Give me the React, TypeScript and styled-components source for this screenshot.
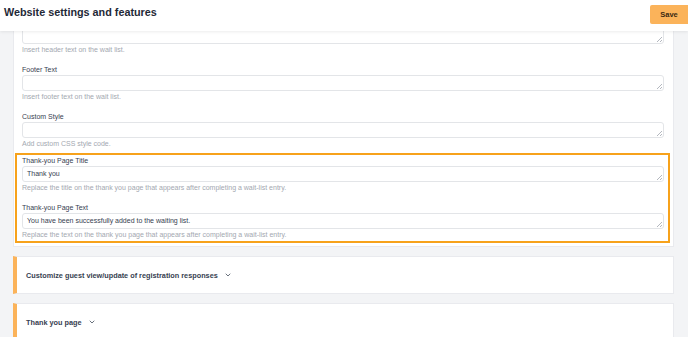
import React from "react";
import styled, { createGlobalStyle } from "styled-components";
import { ChevronDown } from "lucide-react";

const GlobalStyle = createGlobalStyle`
  html, body {
    margin: 0;
    padding: 0;
    background: #f3f4f6;
    font-family: "Liberation Sans", Arial, sans-serif;
    overflow: hidden;
  }
`;

const Page = styled.div`
  width: 688px;
  height: 337px;
  display: flex;
  flex-direction: column;
  overflow: hidden;
`;

const Header = styled.header`
  position: relative;
  z-index: 2;
  height: 31px;
  flex-shrink: 0;
  background: #fff;
  box-shadow: 0 1px 3px rgba(0, 0, 0, 0.08);
  display: flex;
  justify-content: space-between;
  align-items: flex-start;
  padding-left: 4px;
`;

const Title = styled.h1`
  margin: 6px 0 0;
  font-size: 10.8px;
  font-weight: 700;
  color: #1f2937;
`;

const SaveButton = styled.button`
  margin-top: 5px;
  width: 38px;
  height: 19px;
  border: none;
  border-radius: 2px 0 0 2px;
  background: #fbb35a;
  color: #3b2a12;
  font-family: inherit;
  font-size: 7.5px;
  font-weight: 700;
  padding: 0;
`;

const Scroller = styled.div`
  flex: 1;
  overflow: hidden;
`;

const Content = styled.div`
  margin-top: -3px;
  padding: 0 14px 0 13px;
  display: flex;
  flex-direction: column;
`;

const Card = styled.div`
  background: #fff;
  border: 1px solid #e9eaee;
  border-top: none;
  padding: 0 9px 3px 8px;
`;

const Field = styled.div`
  display: flex;
  flex-direction: column;
  margin-bottom: 11px;
  &:last-child {
    margin-bottom: 0;
  }
`;

const Label = styled.label`
  font-size: 7px;
  line-height: 9px;
  color: #374151;
  margin-bottom: 1px;
`;

const AreaWrap = styled.div`
  position: relative;
  &::after {
    content: "";
    position: absolute;
    right: 2px;
    bottom: 2px;
    width: 5px;
    height: 5px;
    background: linear-gradient(
      135deg,
      transparent 0 45%,
      #b4b8bf 45% 58%,
      transparent 58% 72%,
      #b4b8bf 72% 86%,
      transparent 86%
    );
  }
`;

const Area = styled.textarea`
  box-sizing: border-box;
  height: 16px;
  width: 100%;
  border: 1px solid #e3e5e8;
  border-radius: 3px;
  padding: 2px 4px;
  font-family: inherit;
  font-size: 7px;
  line-height: 9px;
  color: #374151;
  background: #fff;
  outline: none;
  resize: none;
  display: block;
  margin: 0;
  overflow: hidden;
`;

const Help = styled.div`
  margin-top: 2px;
  font-size: 7px;
  line-height: 8px;
  color: #a3a8b0;
`;

const Highlight = styled.div`
  margin: -6px -6px 0 -7px;
  border: 2px solid #f7a21b;
  padding: 1px 4px 2px 5px;
  display: flex;
  flex-direction: column;
`;

const Section = styled.div<{ $top: number }>`
  margin-top: ${(p) => p.$top}px;
  height: 38px;
  flex-shrink: 0;
  background: #fff;
  border: 1px solid #e9eaee;
  border-left: 4px solid #fbb35a;
  box-sizing: border-box;
  display: flex;
  align-items: center;
  padding-left: 9px;
  gap: 6px;
`;

const SectionTitle = styled.span`
  font-size: 7.3px;
  font-weight: 700;
  color: #374151;
`;

const fields = [
  { label: "Footer Text", help: "Insert footer text on the wait list.", value: "" },
  { label: "Custom Style", help: "Add custom CSS style code.", value: "" },
];

const highlighted = [
  {
    label: "Thank-you Page Title",
    help: "Replace the title on the thank you page that appears after completing a wait-list entry.",
    value: "Thank you",
  },
  {
    label: "Thank-you Page Text",
    help: "Replace the text on the thank you page that appears after completing a wait-list entry.",
    value: "You have been successfully added to the waiting list.",
  },
];

const TextField = ({ label, help, value }: { label?: string; help: string; value: string }) => (
  <Field>
    {label && <Label>{label}</Label>}
    <AreaWrap>
      <Area readOnly value={value} />
    </AreaWrap>
    <Help>{help}</Help>
  </Field>
);

const App = () => {
  return (
    <Page>
      <GlobalStyle />
      <Header>
        <Title>Website settings and features</Title>
        <SaveButton>Save</SaveButton>
      </Header>
      <Scroller>
        <Content>
          <Card>
            <TextField help="Insert header text on the wait list." value="" />
            {fields.map((f) => (
              <TextField key={f.label} {...f} />
            ))}
            <Highlight>
              {highlighted.map((f) => (
                <TextField key={f.label} {...f} />
              ))}
            </Highlight>
          </Card>
          <Section $top={9}>
            <SectionTitle>Customize guest view/update of registration responses</SectionTitle>
            <ChevronDown size={8} strokeWidth={2.5} color="#4b5563" />
          </Section>
          <Section $top={9}>
            <SectionTitle>Thank you page</SectionTitle>
            <ChevronDown size={8} strokeWidth={2.5} color="#4b5563" />
          </Section>
        </Content>
      </Scroller>
    </Page>
  );
};

export default App;
